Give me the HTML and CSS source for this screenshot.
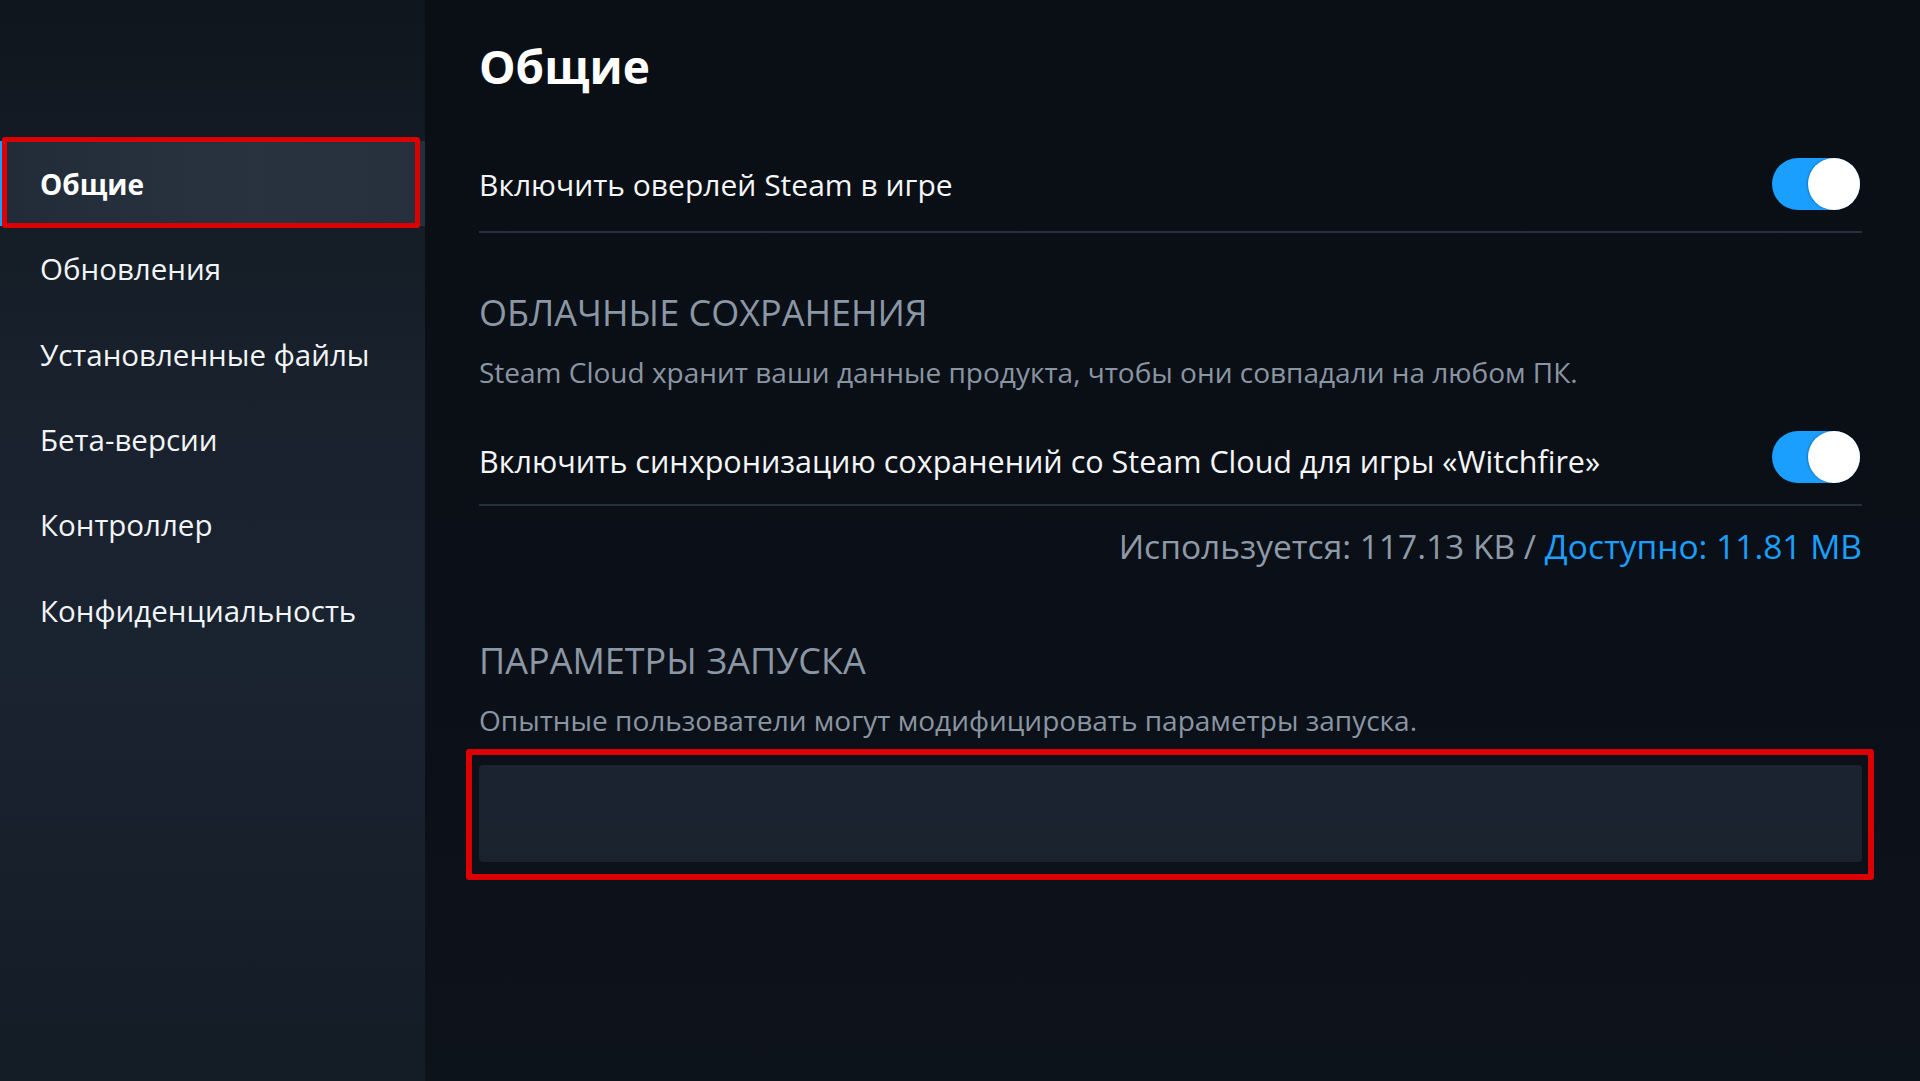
FILE: index.html
```html
<!DOCTYPE html>
<html lang="ru">
<head>
<meta charset="utf-8">
<title>Общие</title>
<link rel="stylesheet" href="styles.css">
</head>
<body>
<div class="app">
  <nav class="sidebar">
    <div class="nav-item active">Общие<span class="mark mark-nav"></span></div>
    <div class="nav-item">Обновления</div>
    <div class="nav-item">Установленные файлы</div>
    <div class="nav-item">Бета-версии</div>
    <div class="nav-item">Контроллер</div>
    <div class="nav-item">Конфиденциальность</div>
  </nav>
  <main class="content">
    <h1 class="title">Общие</h1>
    <div class="row row-first">
      <span class="row-label">Включить оверлей Steam в игре</span>
      <span class="toggle"><span class="knob"></span></span>
    </div>
    <div class="section-head head-cloud">ОБЛАЧНЫЕ СОХРАНЕНИЯ</div>
    <div class="section-desc">Steam Cloud хранит ваши данные продукта, чтобы они совпадали на любом ПК.</div>
    <div class="row row-second">
      <span class="row-label">Включить синхронизацию сохранений со Steam Cloud для игры «Witchfire»</span>
      <span class="toggle"><span class="knob"></span></span>
    </div>
    <div class="storage">Используется: 117.13 KB / <span class="avail">Доступно: 11.81 MB</span></div>
    <div class="section-head head-launch">ПАРАМЕТРЫ ЗАПУСКА</div>
    <div class="section-desc">Опытные пользователи могут модифицировать параметры запуска.</div>
    <div class="launch-wrap">
      <div class="launch-input"></div>
      <span class="mark mark-input"></span>
    </div>
  </main>
</div>
</body>
</html>
```

FILE: styles.css
```css
html, body {
  margin: 0;
  padding: 0;
}
body {
  width: 1920px;
  height: 1081px;
  overflow: hidden;
  background: #0b0f16;
  font-family: "Open Sans", "Noto Sans", "DejaVu Sans", sans-serif;
  color: #ffffff;
}
.app {
  display: flex;
  width: 1920px;
  height: 1081px;
}
.sidebar {
  width: 425px;
  flex: none;
  padding-top: 141px;
  box-sizing: border-box;
  background: linear-gradient(180deg, #10161e 0%, #18212c 35%, #1a2330 60%, #141c26 100%);
}
.nav-item {
  position: relative;
  height: 85.3px;
  display: flex;
  align-items: center;
  padding-left: 40px;
  font-size: 29.5px;
  color: #f2f4f6;
}
.nav-item.active {
  font-size: 28px;
  font-weight: 700;
  color: #ffffff;
  background: linear-gradient(90deg, #222c39 0%, #28333f 60%, #25303c 100%);
  box-shadow: inset 4px 0 0 #1a9fff;
}
.mark {
  position: absolute;
  border: 5px solid #dc0000;
  border-radius: 3px;
  pointer-events: none;
}
.mark-nav {
  top: -4px;
  bottom: -2px;
  left: 2px;
  right: 5px;
}
.content {
  flex: 1;
  padding: 0 58px 0 54px;
  background: linear-gradient(180deg, #0a0e15 0%, #0b1018 60%, #0d131b 100%);
}
.title {
  margin: 34px 0 0;
  font-size: 46px;
  line-height: 64px;
  font-weight: 700;
  color: #ffffff;
}
.row {
  display: flex;
  align-items: center;
  justify-content: space-between;
  height: 94px;
  border-bottom: 2px solid #262f3b;
}
.row-first {
  margin-top: 39px;
}
.row-second {
  margin-top: 20px;
}
.row-label {
  font-size: 30px;
  color: #f4f6f8;
}
.row-second .row-label {
  margin-top: 7px;
  font-size: 30.5px;
}
.toggle {
  position: relative;
  width: 88px;
  height: 52px;
  margin-right: 2px;
  border-radius: 26px;
  background: #1a9fff;
  display: flex;
  justify-content: flex-end;
  align-items: center;
}
.knob {
  width: 52px;
  height: 52px;
  border-radius: 50%;
  background: #ffffff;
  box-shadow: -1px 0 2px rgba(0,0,0,0.25);
}
.section-head {
  font-size: 36px;
  line-height: 44px;
  color: #8b97a4;
}
.head-cloud {
  margin-top: 58px;
}
.head-launch {
  margin-top: 73px;
}
.section-desc {
  margin-top: 19px;
  font-size: 28px;
  line-height: 36px;
  color: #8a95a2;
}
.storage {
  margin-top: 20px;
  text-align: right;
  font-size: 33.5px;
  line-height: 40px;
  color: #8e9aa7;
}
.avail {
  color: #1a9fff;
}
.launch-wrap {
  position: relative;
  margin-top: 27px;
}
.launch-input {
  height: 97px;
  border-radius: 4px;
  background: linear-gradient(180deg, #1b2330 0%, #1a222e 100%);
}
.mark-input {
  top: -16px;
  bottom: -18px;
  left: -13px;
  right: -12px;
  border-width: 6px;
}
```
